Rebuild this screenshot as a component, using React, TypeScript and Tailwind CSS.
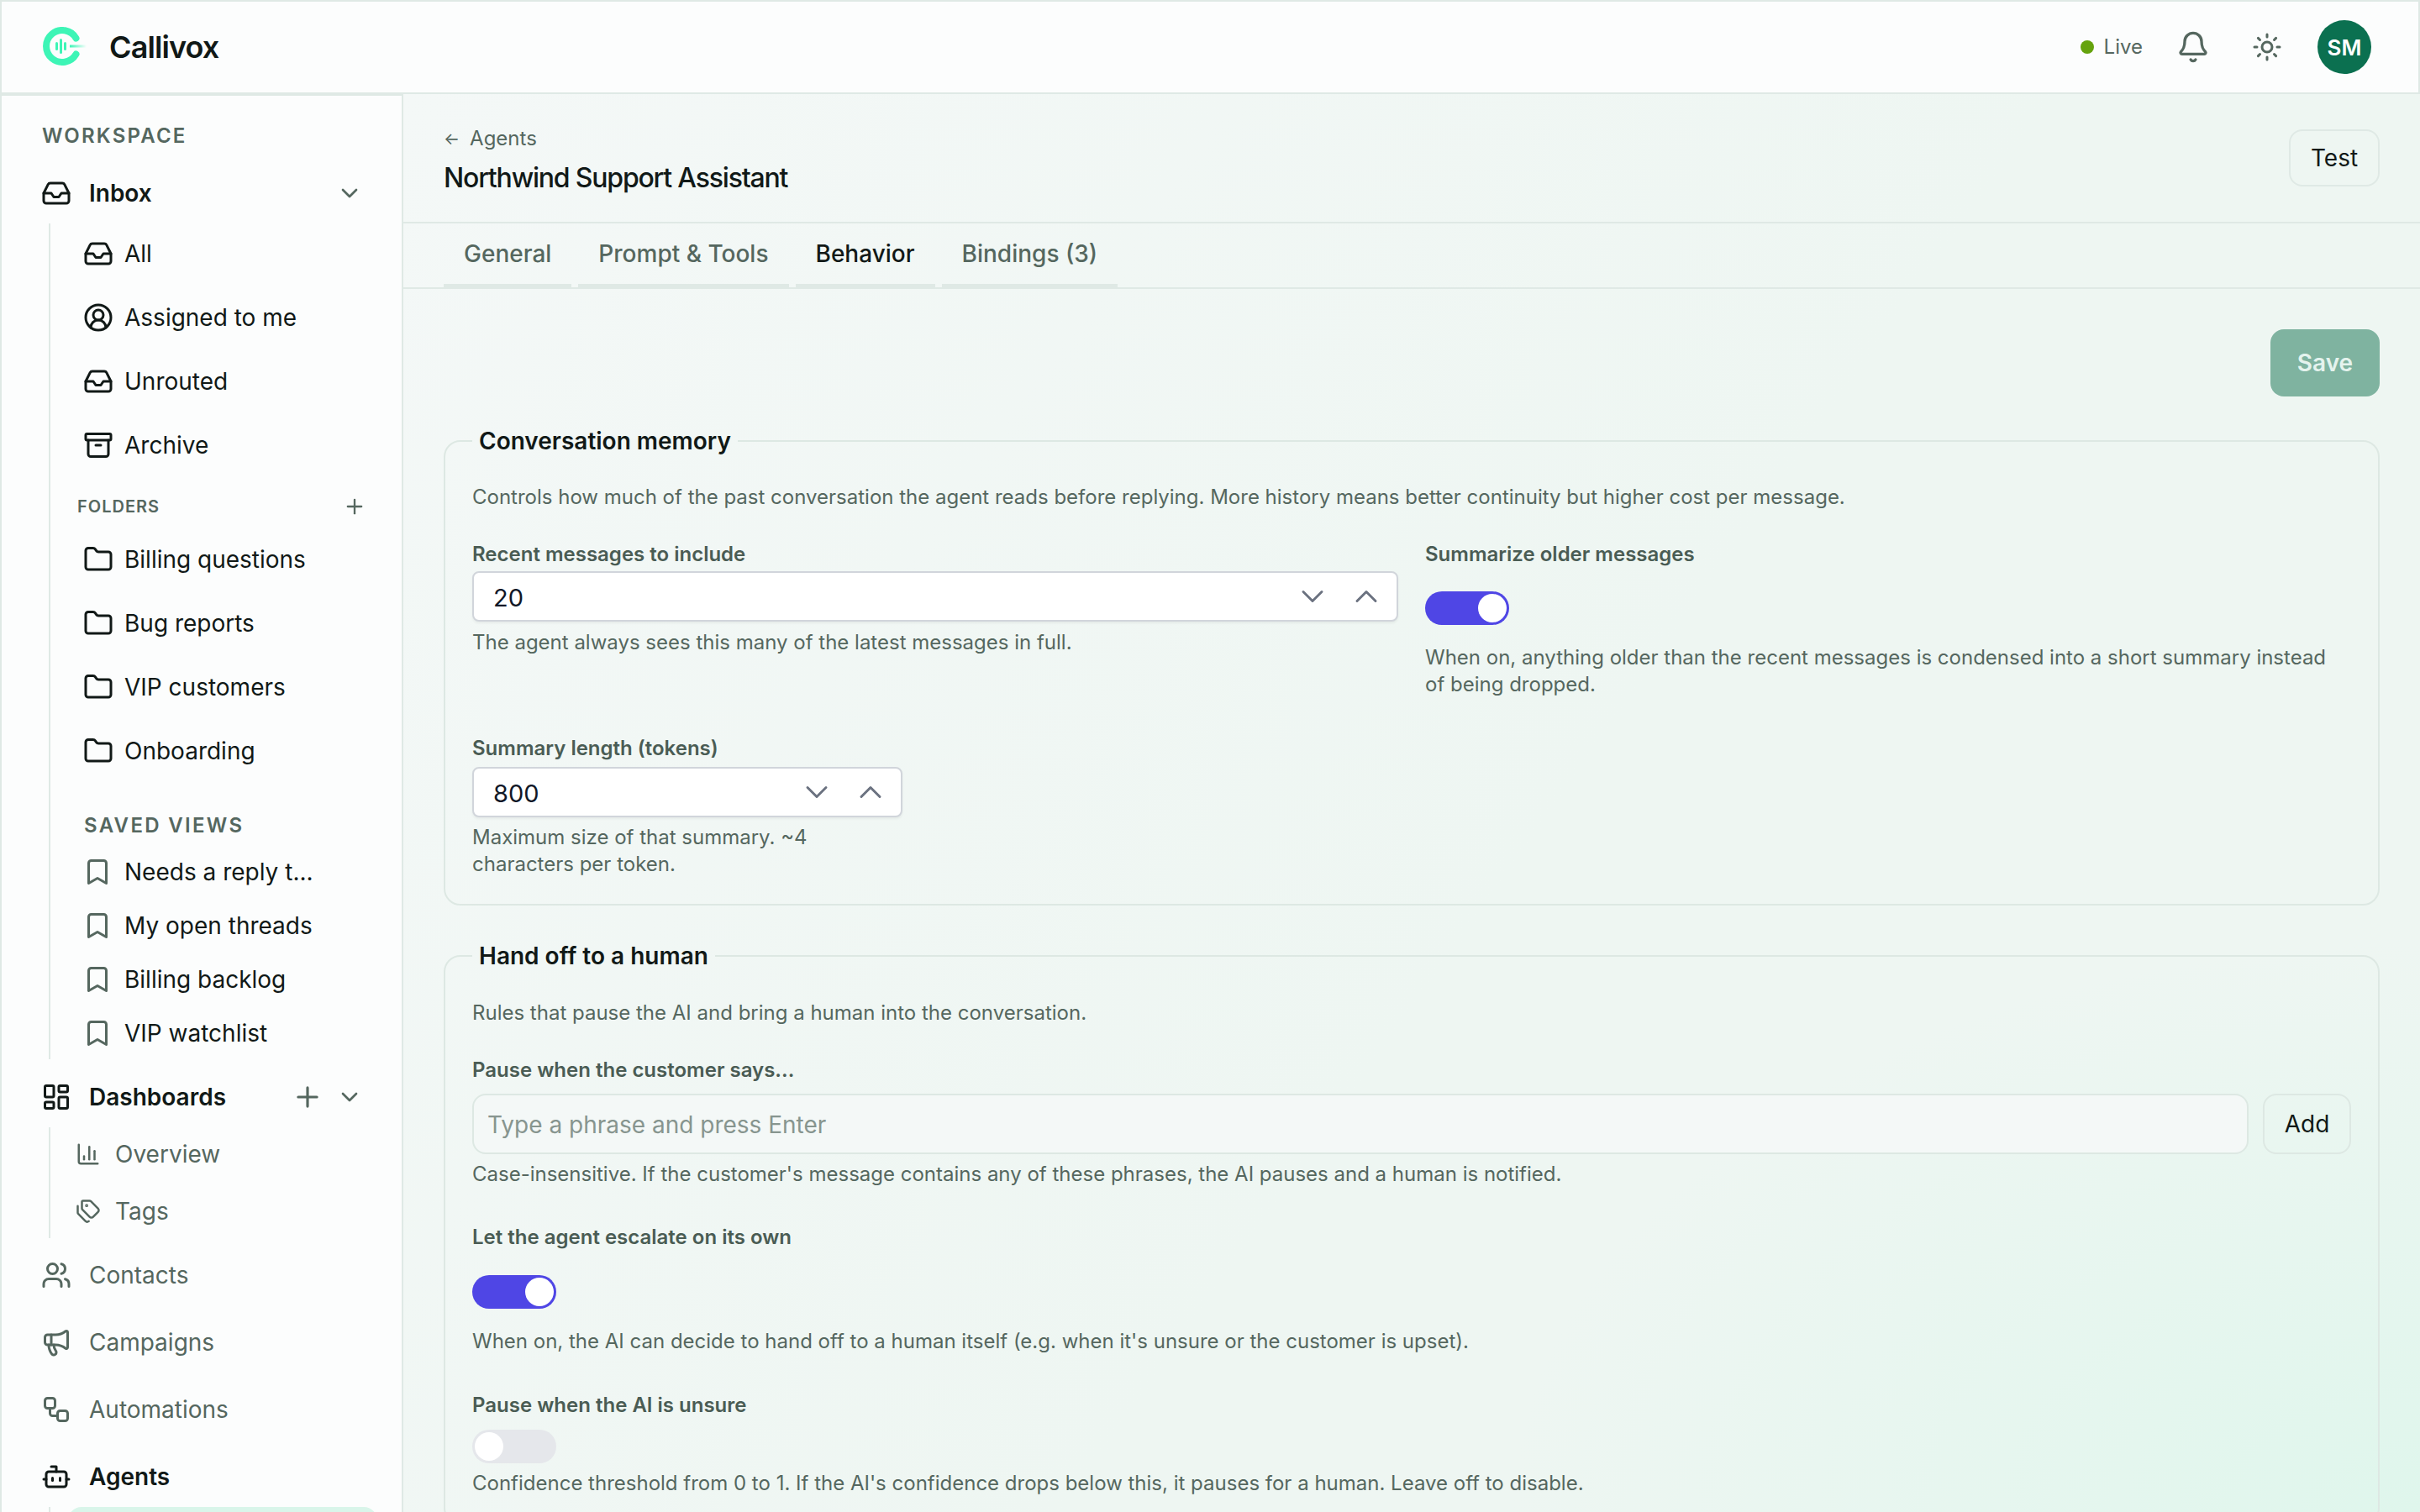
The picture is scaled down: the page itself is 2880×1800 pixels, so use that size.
import {
  Archive,
  Bell,
  Bookmark,
  Bot,
  ChartColumn,
  ChevronDown,
  ChevronUp,
  CircleUserRound,
  Folder,
  Inbox,
  LayoutDashboard,
  Megaphone,
  Plus,
  Sun,
  Tags,
  Users,
  Workflow,
} from 'lucide-react';
import type { ReactNode } from 'react';

const INBOX_ITEMS = [
  { label: 'All', icon: Inbox },
  { label: 'Assigned to me', icon: CircleUserRound },
  { label: 'Unrouted', icon: Inbox },
  { label: 'Archive', icon: Archive },
];
const FOLDERS = ['Billing questions', 'Bug reports', 'VIP customers', 'Onboarding'];
const SAVED_VIEWS = ['Needs a reply t...', 'My open threads', 'Billing backlog', 'VIP watchlist'];
const TABS = ['General', 'Prompt & Tools', 'Behavior', 'Bindings (3)'];

function Logo() {
  return (
    <svg width="56" height="48" viewBox="0 0 56 48" fill="none" className="shrink-0">
      <defs>
        <linearGradient id="logo-dash" x1="0" y1="0" x2="1" y2="0">
          <stop offset="0" stopColor="#3df5b6" />
          <stop offset="1" stopColor="#3df5b6" stopOpacity="0" />
        </linearGradient>
      </defs>
      <path d="M39.5 13.5 A19 19 0 1 0 39.5 32.5" stroke="#3df5b6" strokeWidth="8" strokeLinecap="round" />
      <rect x="15" y="18" width="3" height="10" rx="1.5" fill="#3df5b6" />
      <rect x="20" y="14" width="3" height="18" rx="1.5" fill="#3df5b6" />
      <rect x="25" y="18" width="3" height="10" rx="1.5" fill="#3df5b6" />
      <rect x="32" y="21.5" width="20" height="3" fill="url(#logo-dash)" />
    </svg>
  );
}

function SubRow({ label, icon: Icon }: { label: string; icon: typeof Inbox }) {
  return (
    <div className="flex h-[70px] items-center gap-[13px] text-[#111917]">
      <Icon size={36} strokeWidth={2} className="shrink-0" />
      <span>{label}</span>
    </div>
  );
}

function NavRow({ label, icon: Icon, active }: { label: string; icon: typeof Inbox; active?: boolean }) {
  return (
    <div
      className={`flex h-[72px] items-center gap-[21px] ${
        active ? 'font-semibold text-[#111917]' : 'text-[#55675f]'
      }`}
    >
      <Icon size={36} strokeWidth={2} className="shrink-0" />
      <span>{label}</span>
    </div>
  );
}

function Sidebar() {
  return (
    <aside className="h-[1688px] w-[480px] shrink-0 overflow-hidden border-t-2 border-r-2 border-l-2 border-[#dfe9e5] bg-[#fcfdfd] pt-[30px] pr-[46px] pl-[47px] text-[28px]">
      <div className="ml-[1px] flex h-[36px] items-center text-[24px] font-semibold tracking-[2.2px] text-[#55675f]">
        WORKSPACE
      </div>

      <div className="mt-[14px] flex h-[72px] items-center gap-[21px] font-semibold text-[#111917]">
        <Inbox size={36} strokeWidth={2} className="shrink-0" />
        <span className="flex-1">Inbox</span>
        <ChevronDown size={32} strokeWidth={2} className="text-[#55675f]" />
      </div>

      <div className="ml-[9px] border-l-2 border-[#dfe9e5] pt-[1px] pb-[2px] pl-[39px]">
        <div className="flex flex-col gap-[6px]">
          {INBOX_ITEMS.map((item) => (
            <SubRow key={item.label} label={item.label} icon={item.icon} />
          ))}
        </div>
        <div className="mt-[18px] -ml-[7px] flex h-[40px] items-center justify-between text-[20px] font-semibold tracking-[1px] text-[#55675f]">
          <span>FOLDERS</span>
          <Plus size={28} strokeWidth={2} className="mr-[-4px]" />
        </div>
        <div className="mt-[8px] flex flex-col gap-[6px]">
          {FOLDERS.map((name) => (
            <SubRow key={name} label={name} icon={Folder} />
          ))}
        </div>
        <div className="mt-[36px] ml-[1px] flex h-[36px] items-center text-[24px] font-semibold tracking-[2.3px] text-[#55675f]">
          SAVED VIEWS
        </div>
        <div className="mt-[8px] -ml-[1px] flex flex-col gap-[6px]">
          {SAVED_VIEWS.map((name) => (
            <div key={name} className="flex h-[58px] items-center gap-[14px] text-[#111917]">
              <Bookmark size={36} strokeWidth={2} className="shrink-0 text-[#55675f]" />
              <span>{name}</span>
            </div>
          ))}
        </div>
      </div>

      <div className="mt-[9px] flex h-[72px] items-center gap-[21px] font-semibold text-[#111917]">
        <LayoutDashboard size={36} strokeWidth={2} className="shrink-0" />
        <span className="flex-1">Dashboards</span>
        <Plus size={38} strokeWidth={2} className="mr-[-6px] text-[#55675f]" />
        <ChevronDown size={32} strokeWidth={2} className="text-[#55675f]" />
      </div>

      <div className="ml-[9px] flex flex-col gap-[8px] border-l-2 border-[#dfe9e5] py-[2px] pl-[30px] text-[#55675f]">
        <div className="flex h-[60px] items-center gap-[17px]">
          <ChartColumn size={30} strokeWidth={2} className="shrink-0" />
          <span>Overview</span>
        </div>
        <div className="flex h-[60px] items-center gap-[17px]">
          <Tags size={30} strokeWidth={2} className="shrink-0" />
          <span>Tags</span>
        </div>
      </div>

      <div className="mt-[8px] flex flex-col gap-[8px]">
        <NavRow label="Contacts" icon={Users} />
        <NavRow label="Campaigns" icon={Megaphone} />
        <NavRow label="Automations" icon={Workflow} />
        <NavRow label="Agents" icon={Bot} active />
      </div>

      <div className="-mr-[17px] ml-[9px] h-[60px] border-l-2 border-[#dfe9e5] pl-[21px]">
        <div className="h-[60px] rounded-[16px] bg-[#d9f5ea]" />
      </div>
    </aside>
  );
}

function Label({ children }: { children: ReactNode }) {
  return <div className="text-[24px] leading-[36px] font-semibold text-[#4a5c54]">{children}</div>;
}

function Help({ children, className = '' }: { children: ReactNode; className?: string }) {
  return <p className={`text-[24px] leading-[32px] text-[#55675f] ${className}`}>{children}</p>;
}

function NumberField({ value, className = '' }: { value: string; className?: string }) {
  return (
    <div
      className={`mt-[2px] flex h-[60px] items-center justify-between rounded-[8px] border-2 border-[#d1d5db] bg-white pr-[14px] pl-[23px] text-[29px] text-[#111827] shadow-[0_2px_3px_rgba(0,0,0,0.05)] ${className}`}
    >
      <span className="pt-[3px]">{value}</span>
      <span className="flex gap-[20px] text-[#6b7280]">
        <ChevronDown size={44} strokeWidth={1.6} />
        <ChevronUp size={44} strokeWidth={1.6} />
      </span>
    </div>
  );
}

function Toggle({ on }: { on?: boolean }) {
  return (
    <div
      className={`flex h-[40px] w-[100px] items-center rounded-full px-[3px] ${
        on ? 'justify-end bg-[#4f46e5]' : 'justify-start bg-[#e5e7eb]'
      }`}
    >
      <div className="h-[34px] w-[34px] rounded-full bg-white" />
    </div>
  );
}

function Section({ title, children }: { title: string; children: ReactNode }) {
  return (
    <fieldset className="rounded-[20px] border-2 border-[#dde8e3] px-[32px] pb-[31px]">
      <legend className="px-[8px] text-[28px] leading-[36px] font-semibold text-[#111917]">{title}</legend>
      {children}
    </fieldset>
  );
}

export default function App() {
  return (
    <div className="flex h-[1800px] w-[2880px] flex-col overflow-hidden bg-[#f3f7f6] [font-family:Inter,sans-serif]">
      <header className="flex h-[112px] shrink-0 items-center border-2 border-[#dfe9e5] bg-[#fcfdfd] pr-[56px] pl-[49px]">
        <Logo />
        <span className="ml-[23px] flex-1 text-[36px] font-semibold tracking-[-0.9px] text-[#111917]">Callivox</span>
        <span className="h-[16px] w-[16px] rounded-full bg-[#65a30d]" />
        <span className="ml-[12px] text-[24px] text-[#55675f]">Live</span>
        <Bell size={40} strokeWidth={2} className="ml-[40px] text-[#55675f]" />
        <Sun size={36} strokeWidth={2} className="ml-[50px] text-[#55675f]" />
        <div className="ml-[42px] flex h-[64px] w-[64px] items-center justify-center rounded-full bg-[#0b7050] text-[26px] font-semibold text-white">
          SM
        </div>
      </header>

      <div className="flex min-h-0 flex-1">
        <Sidebar />
        <main className="min-w-0 flex-1 overflow-hidden bg-[radial-gradient(ellipse_45%_40%_at_100%_100%,#dff6ec,transparent),linear-gradient(125deg,#f4f8f7,#eef6f2_55%)]">
          <div className="flex h-[154px] items-start justify-between border-b-2 border-[#dfe9e5] pt-[38px] pr-[48px] pl-[48px]">
            <div>
              <div className="flex h-[30px] items-center text-[24px] text-[#55675f]">
                <span className="mr-[12px] text-[20px]">←</span>
                Agents
              </div>
              <h1 className="mt-[9px] text-[32px] leading-[46px] font-medium tracking-[-1.2px] text-[#111917]">
                Northwind Support Assistant
              </h1>
            </div>
            <button className="mt-[4px] h-[68px] w-[108px] rounded-[16px] border-2 border-[#dfe9e5] text-[28px] text-[#111917]">
              Test
            </button>
          </div>

          <div className="flex h-[78px] gap-[8px] border-b-2 border-[#dfe9e5] px-[48px]">
            {TABS.map((tab) => (
              <div
                key={tab}
                className={`flex h-[76px] items-center border-b-4 border-[#dfe9e5] px-[24px] text-[28px] font-medium ${
                  tab === 'Behavior' ? 'text-[#111917]' : 'text-[#55675f]'
                }`}
              >
                {tab}
              </div>
            ))}
          </div>

          <div className="px-[48px] pt-[48px]">
            <div className="flex justify-end">
              <button className="h-[80px] w-[130px] rounded-[16px] bg-[#7fb3a0] text-[28px] font-semibold text-[#e5f3ee]">
                Save
              </button>
            </div>

            <div className="mt-[35px]">
              <Section title="Conversation memory">
                <Help className="mt-[33px]">
                  Controls how much of the past conversation the agent reads before replying. More history means better
                  continuity but higher cost per message.
                </Help>
                <div className="mt-[34px] grid grid-cols-2 gap-x-[32px]">
                  <div>
                    <Label>Recent messages to include</Label>
                    <NumberField value="20" />
                    <Help className="mt-[9px]">The agent always sees this many of the latest messages in full.</Help>
                  </div>
                  <div>
                    <Label>Summarize older messages</Label>
                    <div className="mt-[26px]">
                      <Toggle on />
                    </div>
                    <Help className="mt-[23px]">
                      When on, anything older than the recent messages is condensed into a short summary instead of being
                      dropped.
                    </Help>
                  </div>
                </div>
                <div className="mt-[42px] w-[512px]">
                  <Label>Summary length (tokens)</Label>
                  <NumberField value="800" className="mt-[4px]" />
                  <Help className="mt-[8px]">Maximum size of that summary. ~4 characters per token.</Help>
                </div>
              </Section>
            </div>

            <div className="mt-[42px]">
              <Section title="Hand off to a human">
                <Help className="mt-[34px]">Rules that pause the AI and bring a human into the conversation.</Help>
                <div className="mt-[34px]">
                  <Label>Pause when the customer says...</Label>
                </div>
                <div className="mt-[10px] flex gap-[17px]">
                  <div className="flex h-[72px] flex-1 items-center rounded-[16px] border-2 border-[#dde8e3] bg-[#f4f8f7] px-[16px] pt-[2px] text-[28px] text-[#87958f]">
                    Type a phrase and press Enter
                  </div>
                  <button className="h-[72px] w-[105px] rounded-[16px] border-2 border-[#dde8e3] text-[28px] text-[#111917]">
                    Add
                  </button>
                </div>
                <Help className="mt-[8px]">
                  Case-insensitive. If the customer's message contains any of these phrases, the AI pauses and a human is
                  notified.
                </Help>
                <div className="mt-[41px]">
                  <Label>Let the agent escalate on its own</Label>
                </div>
                <div className="mt-[27px]">
                  <Toggle on />
                </div>
                <Help className="mt-[23px]">
                  When on, the AI can decide to hand off to a human itself (e.g. when it's unsure or the customer is upset).
                </Help>
                <div className="mt-[42px]">
                  <Label>Pause when the AI is unsure</Label>
                </div>
                <div className="mt-[11px]">
                  <Toggle />
                </div>
                <Help className="mt-[8px]">
                  Confidence threshold from 0 to 1. If the AI's confidence drops below this, it pauses for a human. Leave off
                  to disable.
                </Help>
              </Section>
            </div>
          </div>
        </main>
      </div>
    </div>
  );
}
